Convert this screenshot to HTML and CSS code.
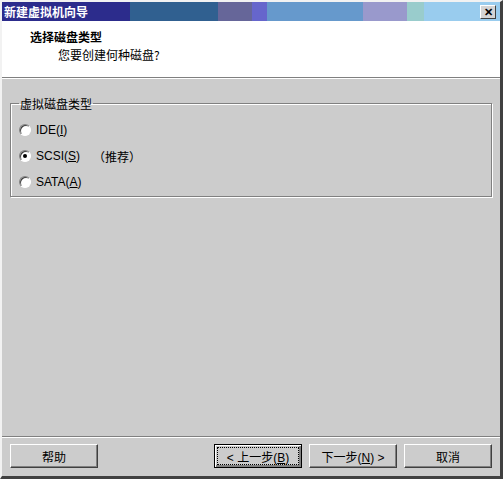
FILE: index.html
```html
<!DOCTYPE html>
<html lang="zh">
<head>
<meta charset="utf-8">
<link rel="stylesheet" href="styles.css">
</head>
<body>
<div class="window">
  <div class="titlebar">
    <span class="title">新建虚拟机向导</span>
    <span class="close">✕</span>
  </div>
  <div class="header">
    <div class="h-title">选择磁盘类型</div>
    <div class="h-sub">您要创建何种磁盘?</div>
  </div>
  <div class="body">
    <fieldset class="group">
      <legend>虚拟磁盘类型</legend>
      <div class="radio"><span class="dot"></span><span>IDE(<u>I</u>)</span></div>
      <div class="radio"><span class="dot on"></span><span>SCSI(<u>S</u>)</span><span class="rec">（推荐）</span></div>
      <div class="radio"><span class="dot"></span><span>SATA(<u>A</u>)</span></div>
    </fieldset>
  </div>
  <div class="footer">
    <button class="btn">帮助</button>
    <span class="spacer"></span>
    <button class="btn focus">&lt; 上一步(<u>B</u>)</button>
    <button class="btn">下一步(<u>N</u>) &gt;</button>
    <button class="btn">取消</button>
  </div>
</div>
</body>
</html>
```
FILE: styles.css
```css
* { box-sizing: border-box; }
html, body { margin: 0; padding: 0; }
body {
  width: 503px; height: 479px; overflow: hidden;
  font-family: "Liberation Sans", "Noto Sans CJK SC", sans-serif;
  font-size: 12px; color: #000; background: #cccccc;
}
.window {
  width: 503px; height: 479px;
  display: flex; flex-direction: column;
  border-top: 2px solid #f2f2f2;
  border-left: 2px solid #f2f2f2;
  border-right: 3px solid #404040;
  border-bottom: 3px solid #404040;
  background: #cccccc;
}
.titlebar {
  height: 19px; flex: none;
  display: flex; align-items: center; justify-content: space-between;
  padding: 0 4px 0 2px;
  background: linear-gradient(to right,
    #2c2c8c 0, #2c2c8c 128px,
    #306090 128px, #306090 216px,
    #666699 216px, #666699 250px,
    #6666cc 250px, #6666cc 265px,
    #6699cc 265px, #6699cc 361px,
    #9999cc 361px, #9999cc 405px,
    #99cccc 405px, #99cccc 422px,
    #99ccee 422px);
}
.title { color: #fff; font-weight: bold; font-family: "Noto Sans CJK SC", sans-serif; font-size: 12px; }
.close {
  width: 16px; height: 14px; background: #d4d4d4;
  border: 1px solid; border-color: #fff #404040 #404040 #fff;
  font-size: 11px; font-weight: bold; line-height: 12px; text-align: center;
}
.header {
  height: 57px; flex: none; background: #fff;
  border-bottom: 1px solid #808080;
  box-shadow: 0 1px 0 #fff;
  padding: 8px 0 0 28px;
  font-family: "Noto Sans CJK SC", sans-serif;
}
.h-title { font-weight: bold; line-height: 16px; }
.h-sub { padding-left: 28px; line-height: 18px; margin-top: 1px; }
.body { flex: 1; padding: 17px 8px 0 8px; }
.group {
  margin: 0; padding: 5px 0 4px 8px;
  height: 102px;
  border: 1px solid #808080; box-shadow: 1px 1px 0 #fff, inset 1px 1px 0 #fff;
}
.group legend { padding: 0 1px; margin-left: 0; font-family: "Noto Sans CJK SC", sans-serif; }
.radio { display: flex; align-items: center; height: 26px; gap: 5px; }
.dot {
  width: 12px; height: 12px; border-radius: 50%;
  background: #fff; border: 1px solid; border-color: #808080 #fff #fff #808080;
  box-shadow: inset 1px 1px 0 #404040;
  display: flex; align-items: center; justify-content: center;
}
.dot.on::after { content: ""; width: 4px; height: 4px; border-radius: 50%; background: #000; }
.rec { margin-left: 8px; font-family: "Noto Sans CJK SC", sans-serif; }
.footer {
  height: 40px; flex: none;
  border-top: 1px solid #808080; box-shadow: inset 0 1px 0 #fff;
  display: flex; align-items: flex-start; gap: 7px;
  padding: 7px 8px 0 8px;
}
.spacer { flex: 1; }
.btn {
  width: 88px; height: 24px; padding: 0;
  font-family: "Liberation Sans", "Noto Sans CJK SC", sans-serif; font-size: 12px; color: #000;
  background: #cccccc;
  border: 1px solid; border-color: #fff #404040 #404040 #fff;
  box-shadow: inset -1px -1px 0 #808080;
}
.btn.focus { border: 1px solid #000; box-shadow: inset 1px 1px 0 #fff, inset -2px -2px 0 #808080; outline: 1px dotted #000; outline-offset: -4px; }
```
